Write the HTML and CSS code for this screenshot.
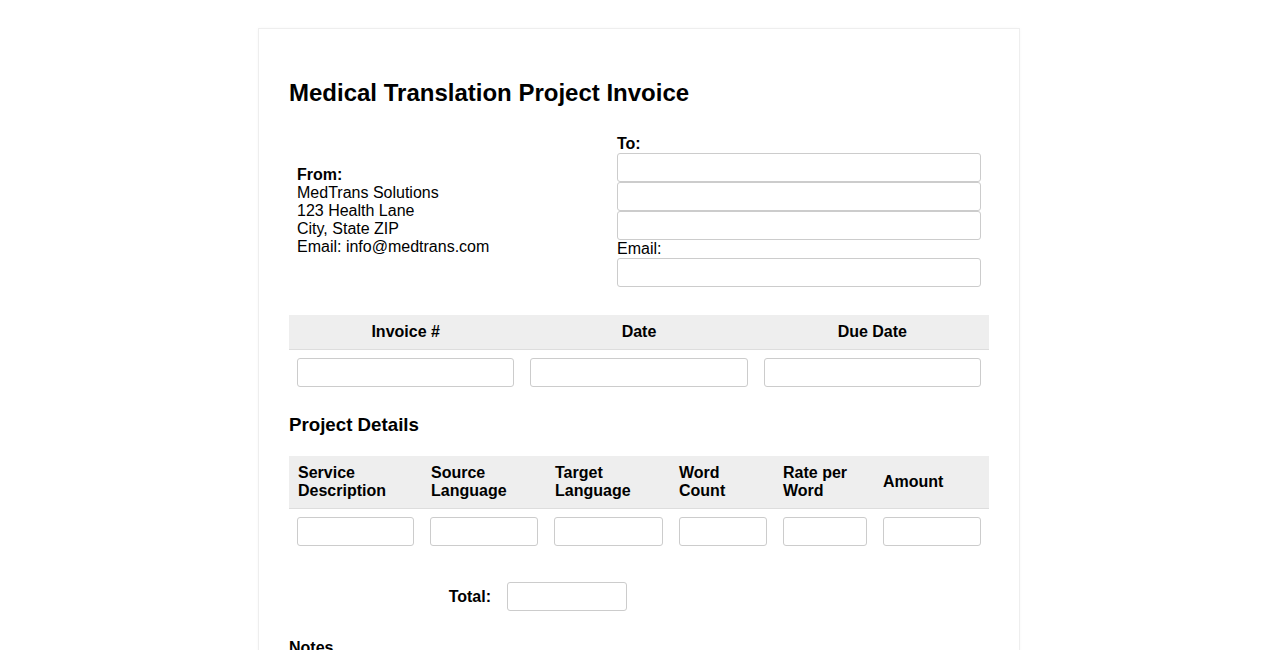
FILE: index.html
```html
<!DOCTYPE html>
<html lang="en">
<head>
<meta charset="utf-8">
<title>Medical Translation Project Invoice</title>
<link rel="stylesheet" href="styles.css">
</head>
<body>
<div class="invoice">
  <h1 class="title">Medical Translation Project Invoice</h1>

  <table class="parties">
    <tr>
      <td class="from">
        <strong>From:</strong><br>
        MedTrans Solutions<br>
        123 Health Lane<br>
        City, State ZIP<br>
        Email: info@medtrans.com
      </td>
      <td class="to">
        <div class="label-bold">To:</div>
        <input type="text" class="field">
        <input type="text" class="field">
        <input type="text" class="field">
        <div class="label">Email:</div>
        <input type="email" class="field">
      </td>
    </tr>
  </table>

  <table class="grid meta">
    <tr>
      <th>Invoice #</th>
      <th>Date</th>
      <th>Due Date</th>
    </tr>
    <tr>
      <td><input type="text" class="field"></td>
      <td><input type="text" class="field"></td>
      <td><input type="text" class="field"></td>
    </tr>
  </table>

  <h3 class="section-title">Project Details</h3>

  <table class="grid details">
    <colgroup>
      <col class="c-service">
      <col class="c-source">
      <col class="c-target">
      <col class="c-count">
      <col class="c-rate">
      <col class="c-amount">
    </colgroup>
    <tr>
      <th class="shift">Service Description</th>
      <th class="shift">Source Language</th>
      <th class="shift">Target Language</th>
      <th>Word Count</th>
      <th>Rate per Word</th>
      <th>Amount</th>
    </tr>
    <tr>
      <td><input type="text" class="field"></td>
      <td><input type="text" class="field"></td>
      <td><input type="text" class="field"></td>
      <td><input type="text" class="field"></td>
      <td><input type="text" class="field"></td>
      <td><input type="text" class="field"></td>
    </tr>
  </table>

  <div class="total-row">
    <div class="total-label">Total:</div>
    <div class="total-cell"><input type="text" class="field total-field"></div>
  </div>

  <div class="label-bold">Notes</div>
  <textarea class="notes" rows="4"></textarea>
</div>
</body>
</html>
```

FILE: styles.css
```css
html, body {
  background: #ffffff;
}

body {
  margin: 0;
  padding: 28px 0 40px;
  font-family: "Liberation Sans", Arial, sans-serif;
  font-size: 16px;
  color: #000;
}

.invoice {
  width: 700px;
  margin: 0 auto;
  padding: 30px;
  border: 1px solid #eeeeee;
  box-shadow: 0 0 4px rgba(0, 0, 0, 0.03);
}

.title {
  font-size: 24px;
  font-weight: bold;
  margin: 20px 0;
}

table {
  width: 100%;
  border-collapse: collapse;
  margin-bottom: 20px;
}

td, th {
  padding: 8px;
}

.parties .from {
  width: 304px;
  vertical-align: middle;
  text-align: left;
}

.parties .to {
  vertical-align: top;
}

.label-bold {
  font-weight: bold;
}

.field {
  display: block;
  width: 100%;
  box-sizing: border-box;
  padding: 6px;
  border: 1px solid #cccccc;
  border-radius: 3px;
  font-family: "Liberation Sans", Arial, sans-serif;
  font-size: 13.333px;
  margin: 0;
  background: #fff;
}

.grid th {
  background: #eeeeee;
  border-bottom: 1px solid #dddddd;
  font-weight: bold;
}

.meta th {
  text-align: center;
  width: 33.33%;
}

.details {
  table-layout: fixed;
}

.details th {
  text-align: left;
}

.details th.shift {
  padding-left: 9px;
}

.c-service { width: 133px; }
.c-source { width: 124px; }
.c-target { width: 125px; }
.c-count { width: 104px; }
.c-rate { width: 100px; }
.c-amount { width: 114px; }

.section-title {
  font-size: 18.72px;
  line-height: 19px;
  margin: 20px 0 22px;
}

.total-row {
  display: flex;
  align-items: center;
  margin: 20px 0;
}

.total-label {
  width: 194px;
  padding: 8px;
  text-align: right;
  font-weight: bold;
}

.total-cell {
  padding: 8px;
}

.total-field {
  width: 120px;
}

.notes {
  display: block;
  width: 100%;
  box-sizing: border-box;
  margin-top: 4px;
  padding: 6px;
  border: 1px solid #cccccc;
  border-radius: 3px;
  font-family: "Liberation Sans", Arial, sans-serif;
}
```
